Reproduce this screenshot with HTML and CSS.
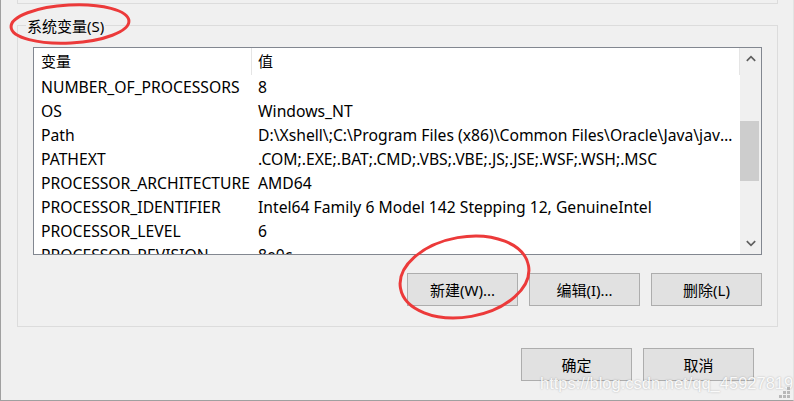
FILE: index.html
```html
<!DOCTYPE html>
<html lang="zh-CN">
<head>
<meta charset="utf-8">
<title>系统变量</title>
<link rel="stylesheet" href="styles.css">
</head>
<body>
<div class="window">
  <div class="prev-group"></div>
  <div class="group">
    <span class="group-label">系统变量(S)</span>
    <div class="list">
      <div class="list-body">
        <div class="list-header">
          <div class="hcell name">变量</div>
          <div class="hcell value">值</div>
        </div>
        <div class="row"><div class="cell name">NUMBER_OF_PROCESSORS</div><div class="cell value">8</div></div>
        <div class="row"><div class="cell name">OS</div><div class="cell value">Windows_NT</div></div>
        <div class="row"><div class="cell name">Path</div><div class="cell value">D:\Xshell\;C:\Program Files (x86)\Common Files\Oracle\Java\javapath;C:\Windows\system32</div></div>
        <div class="row"><div class="cell name">PATHEXT</div><div class="cell value">.COM;.EXE;.BAT;.CMD;.VBS;.VBE;.JS;.JSE;.WSF;.WSH;.MSC</div></div>
        <div class="row"><div class="cell name">PROCESSOR_ARCHITECTURE</div><div class="cell value">AMD64</div></div>
        <div class="row"><div class="cell name">PROCESSOR_IDENTIFIER</div><div class="cell value">Intel64 Family 6 Model 142 Stepping 12, GenuineIntel</div></div>
        <div class="row"><div class="cell name">PROCESSOR_LEVEL</div><div class="cell value">6</div></div>
        <div class="row"><div class="cell name">PROCESSOR_REVISION</div><div class="cell value">8e0c</div></div>
      </div>
      <div class="scrollbar">
        <div class="sb-btn">
          <svg width="10" height="7" viewBox="0 0 10 7"><polyline points="0.8,5.8 5,1.6 9.2,5.8" fill="none" stroke="#606060" stroke-width="1.7"/></svg>
        </div>
        <div class="sb-track"><div class="sb-thumb"></div></div>
        <div class="sb-btn">
          <svg width="10" height="7" viewBox="0 0 10 7"><polyline points="0.8,1.2 5,5.4 9.2,1.2" fill="none" stroke="#606060" stroke-width="1.7"/></svg>
        </div>
      </div>
    </div>
    <div class="btn-row">
      <button class="btn">新建(W)...</button>
      <button class="btn">编辑(I)...</button>
      <button class="btn">删除(L)</button>
    </div>
  </div>
  <div class="dialog-buttons">
    <button class="btn">确定</button>
    <button class="btn">取消</button>
  </div>
  <div class="watermark">https://blog.csdn.net/qq_45927819</div>
  <svg class="grip" width="12" height="12" viewBox="0 0 12 12">
    <rect x="8" y="0" width="3" height="3"/>
    <rect x="4" y="4" width="3" height="3"/>
    <rect x="8" y="4" width="3" height="3"/>
    <rect x="0" y="8" width="3" height="3"/>
    <rect x="4" y="8" width="3" height="3"/>
    <rect x="8" y="8" width="3" height="3"/>
  </svg>
  <svg class="annotations" width="794" height="401" viewBox="0 0 794 401">
    <ellipse cx="70" cy="24" rx="59" ry="19" transform="rotate(-3 70 24)"/>
    <ellipse cx="464.5" cy="277" rx="65" ry="40" transform="rotate(-10 464.5 277)"/>
  </svg>
</div>
</body>
</html>
```

FILE: styles.css
```css
html, body {
  margin: 0;
  padding: 0;
  background: #f0f0f0;
}

body {
  font-family: "Noto Sans", "Noto Sans CJK SC", sans-serif;
  font-size: 15px;
  color: #000;
}

.window {
  position: relative;
  width: 794px;
  height: 401px;
  box-sizing: border-box;
  border-left: 1px solid #a0a0a0;
  border-right: 1px solid #e3e3e3;
  border-bottom: 1px solid #a0a0a0;
  padding: 0 15px 0 16px;
  overflow: hidden;
}

.prev-group {
  height: 3px;
  border: 1px solid #dcdcdc;
  border-top: none;
}

.group {
  position: relative;
  margin-top: 21px;
  border: 1px solid #dcdcdc;
  padding: 21px 15px 20px;
}

.group-label {
  position: absolute;
  top: -10px;
  left: 8px;
  padding: 0 1px;
  line-height: 20px;
  background: #f0f0f0;
}

.list {
  display: flex;
  height: 208px;
  box-sizing: border-box;
  border: 1px solid #828790;
  background: #fff;
  font-size: 15.7px;
}

.list-body {
  width: 706px;
  overflow: hidden;
}

.list-header {
  display: flex;
  height: 27px;
  font-size: 15px;
}

.hcell {
  box-sizing: border-box;
  border-right: 1px solid #e5e5e5;
  line-height: 27px;
  padding-left: 7px;
}

.hcell.name {
  width: 218px;
}

.hcell.value {
  width: 488px;
  padding-left: 6px;
}

.row {
  display: flex;
  height: 24px;
  line-height: 24px;
  white-space: nowrap;
}

.cell {
  box-sizing: border-box;
}

.cell.name {
  width: 218px;
  padding-left: 7px;
}

.cell.value {
  width: 488px;
  padding: 0 4px 0 6px;
  overflow: hidden;
  text-overflow: ellipsis;
}

.scrollbar {
  width: 21px;
  display: flex;
  flex-direction: column;
  background: #f0f0f0;
}

.sb-btn {
  height: 21px;
  display: flex;
  align-items: center;
  justify-content: center;
}

.sb-btn svg {
  display: block;
}

.sb-track {
  flex: 1;
}

.sb-thumb {
  margin-top: 52px;
  width: 19px;
  height: 60px;
  background: #cdcdcd;
}

.btn-row {
  display: flex;
  justify-content: flex-end;
  gap: 11px;
  margin-top: 18px;
}

.btn {
  width: 111px;
  height: 33px;
  box-sizing: border-box;
  border: 1px solid #adadad;
  background: #e1e1e1;
  font: inherit;
  color: #000;
  padding: 0;
  margin: 0;
}

.dialog-buttons {
  display: flex;
  justify-content: flex-end;
  gap: 11px;
  margin-top: 21px;
  padding-right: 24px;
}

.watermark {
  position: absolute;
  left: 539px;
  top: 373px;
  font-family: "Liberation Sans", Arial, sans-serif;
  font-size: 16.5px;
  line-height: 20px;
  color: rgba(255, 255, 255, 0.92);
  text-shadow: 0 0 2px rgba(0, 0, 0, 0.28);
  white-space: nowrap;
}

.grip {
  position: absolute;
  left: 778px;
  top: 387px;
  fill: #b8b8b8;
}

.annotations {
  position: absolute;
  left: -1px;
  top: 0;
  pointer-events: none;
  fill: none;
  stroke: #ec3a3a;
  stroke-width: 3;
}
```
